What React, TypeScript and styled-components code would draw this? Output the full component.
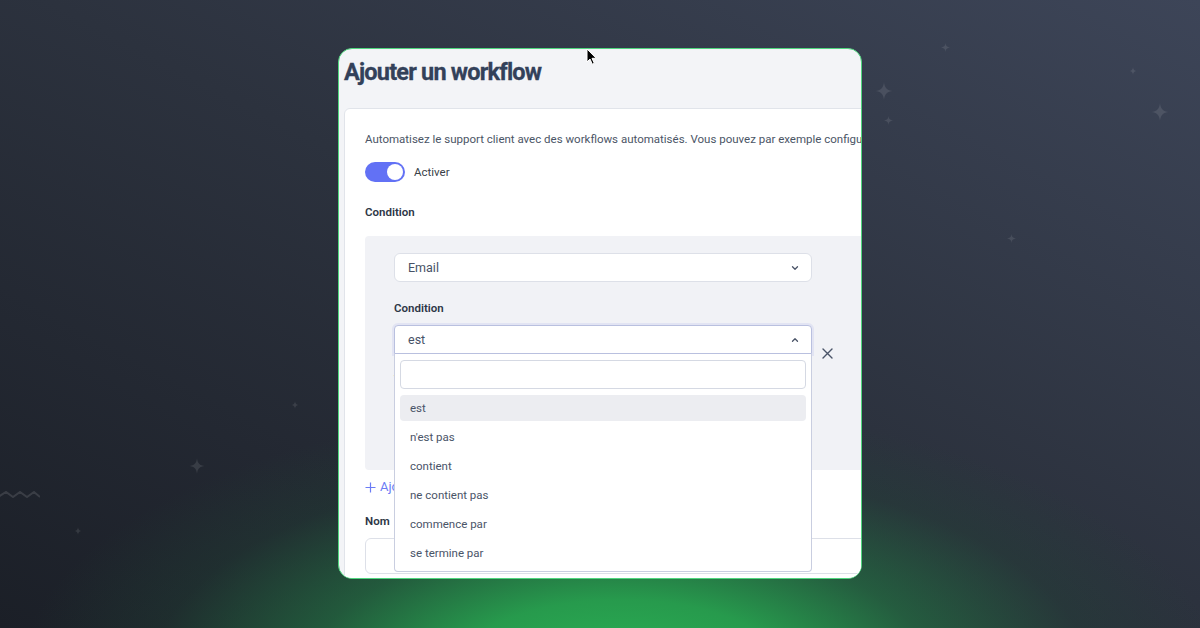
import React from 'react';
import styled, { createGlobalStyle } from 'styled-components';

const GlobalStyle = createGlobalStyle`
  html, body {
    margin: 0;
    padding: 0;
    width: 1200px;
    height: 628px;
    overflow: hidden;
    font-family: Roboto, "Liberation Sans", sans-serif;
  }
  * { box-sizing: border-box; }
`;

const Page = styled.div`
  position: relative;
  width: 1200px;
  height: 628px;
  display: flex;
  justify-content: center;
  align-items: flex-start;
  padding-top: 48px;
  background:
    radial-gradient(ellipse 600px 270px at 620px 675px, #2bb455 0%, rgba(39, 160, 78, 0.95) 28%, rgba(35, 112, 66, 0.7) 52%, rgba(32, 72, 54, 0.3) 78%, rgba(30, 50, 45, 0) 100%),
    linear-gradient(to bottom left, #3d4558 0%, #2c323e 48%, #1b1f27 100%);
`;

const Sparkle = styled.svg<{ $x: number; $y: number; $size: number }>`
  position: absolute;
  left: ${p => p.$x - p.$size / 2}px;
  top: ${p => p.$y - p.$size / 2}px;
  width: ${p => p.$size}px;
  height: ${p => p.$size}px;
  fill: rgba(255, 255, 255, 0.1);
`;

const Zigzag = styled.svg`
  position: absolute;
  left: 0;
  top: 488px;
  width: 40px;
  height: 14px;
  fill: none;
  stroke: rgba(255, 255, 255, 0.12);
  stroke-width: 2;
`;

const Window = styled.div`
  position: relative;
  width: 524px;
  height: 531px;
  border: 1.5px solid #4fd67e;
  border-radius: 14px;
  background: #f3f4f7;
  overflow: hidden;
  padding: 7px 0 0 5px;
`;

const Title = styled.h1`
  margin: 0;
  font-size: 23.5px;
  line-height: 32px;
  font-weight: 700;
  letter-spacing: -0.8px;
  color: #33415a;
  -webkit-text-stroke: 0.3px #33415a;
`;

const Card = styled.div`
  margin-top: 20px;
  width: 720px;
  background: #ffffff;
  border: 1px solid #e1e4ea;
  border-radius: 6px;
  padding: 21px 20px 20px 20px;
`;

const Description = styled.p`
  margin: 0;
  font-size: 11.5px;
  line-height: 18px;
  color: #4b5566;
  white-space: nowrap;
`;

const ToggleRow = styled.div`
  margin-top: 14px;
  display: flex;
  align-items: center;
  gap: 9px;
`;

const Track = styled.div`
  width: 40px;
  height: 20px;
  border-radius: 10px;
  background: #6271f5;
  display: flex;
  align-items: center;
  justify-content: flex-end;
  padding: 0 2px;
`;

const Knob = styled.div`
  width: 16px;
  height: 16px;
  border-radius: 50%;
  background: #ffffff;
`;

const ToggleLabel = styled.span`
  font-size: 11.5px;
  color: #3a3f48;
`;

const Label = styled.div<{ $top: number }>`
  margin-top: ${p => p.$top}px;
  font-size: 11.5px;
  line-height: 16px;
  font-weight: 600;
  color: #2d3646;
`;

const ConditionPanel = styled.div`
  margin-top: 16px;
  background: #f1f2f6;
  border-radius: 4px;
  padding: 17px 29px 16px 29px;
  display: flex;
  align-items: center;
`;

const Fields = styled.div`
  width: 418px;
  display: flex;
  flex-direction: column;
`;

const Select = styled.div<{ $open?: boolean }>`
  height: 29px;
  display: flex;
  align-items: center;
  justify-content: space-between;
  padding: 0 12px 0 13px;
  background: #ffffff;
  border: 1px solid ${p => (p.$open ? '#b9c0df' : '#dde0e8')};
  border-radius: ${p => (p.$open ? '4px 4px 0 0' : '6px')};
  box-shadow: ${p => (p.$open ? '0 0 0 2px rgba(120, 130, 220, 0.12)' : 'none')};
  font-size: 12.5px;
  color: #475266;
`;

const SelectWrap = styled.div<{ $top: number }>`
  position: relative;
  margin-top: ${p => p.$top}px;
`;

const Dropdown = styled.div`
  position: absolute;
  z-index: 5;
  left: 0;
  right: 0;
  top: 100%;
  display: flex;
  flex-direction: column;
  background: #ffffff;
  border: 1px solid #c9cee0;
  border-top: none;
  border-radius: 0 0 4px 4px;
  padding: 6px 5px 5px 5px;
`;

const Search = styled.div`
  height: 29px;
  border: 1px solid #d5d9e3;
  border-radius: 4px;
  margin-bottom: 3px;
`;

const Option = styled.div<{ $active?: boolean }>`
  height: 26px;
  margin-top: 3px;
  display: flex;
  align-items: center;
  padding-left: 10px;
  border-radius: 4px;
  background: ${p => (p.$active ? '#ecedf1' : 'transparent')};
  font-size: 11.5px;
  color: #4a5468;
`;

const ValueBox = styled.div`
  margin-top: 9px;
  height: 58px;
  background: #ffffff;
  border: 1px solid #dde0e8;
  border-radius: 6px;
`;

const RemoveButton = styled.button`
  margin-left: 5px;
  width: 20px;
  height: 20px;
  padding: 0;
  border: none;
  background: transparent;
  display: flex;
  align-items: center;
  justify-content: center;
  color: #4a5468;
`;

const AddLink = styled.div`
  margin-top: 8px;
  display: flex;
  align-items: center;
  gap: 4px;
  font-size: 13px;
  line-height: 18px;
  color: #6b7cf5;
`;

const TextInput = styled.div`
  margin-top: 9px;
  height: 36px;
  border: 1px solid #dde0e8;
  border-radius: 6px;
  background: #ffffff;
`;

const Cursor = styled.svg`
  position: absolute;
  left: 586px;
  top: 48px;
  width: 12px;
  height: 18px;
  z-index: 10;
`;

const Chevron: React.FC<{ up?: boolean }> = ({ up }) => (
  <svg width="8" height="6" viewBox="0 0 8 6" fill="none" stroke="#4a5468" strokeWidth="1.3" strokeLinecap="round" strokeLinejoin="round">
    <path d={up ? 'M1.5 4.2 L4 1.7 L6.5 4.2' : 'M1.5 1.8 L4 4.3 L6.5 1.8'} />
  </svg>
);

const sparklePath = 'M12 0 C12.8 8 16 11.2 24 12 C16 12.8 12.8 16 12 24 C11.2 16 8 12.8 0 12 C8 11.2 11.2 8 12 0 Z';

const sparkles = [
  { x: 884, y: 91, s: 18 },
  { x: 888, y: 120, s: 9 },
  { x: 945, y: 47, s: 9 },
  { x: 1133, y: 71, s: 8 },
  { x: 1160, y: 112, s: 18 },
  { x: 1011, y: 238, s: 9 },
  { x: 295, y: 405, s: 8 },
  { x: 197, y: 466, s: 16 },
  { x: 78, y: 531, s: 8 },
];

const options = ['est', "n'est pas", 'contient', 'ne contient pas', 'commence par', 'se termine par'];

export default function App() {
  return (
    <>
      <GlobalStyle />
      <Page>
        {sparkles.map((s, i) => (
          <Sparkle key={i} $x={s.x} $y={s.y} $size={s.s} viewBox="0 0 24 24">
            <path d={sparklePath} />
          </Sparkle>
        ))}
        <Zigzag viewBox="0 0 40 14">
          <path d="M-2 9 L6 4 L13 9 L20 4 L27 9 L34 4 L40 9" />
        </Zigzag>

        <Window>
          <Title>Ajouter un workflow</Title>
          <Card>
            <Description>
              Automatisez le support client avec des workflows automatisés. Vous pouvez par exemple configurer une réponse automatique.
            </Description>
            <ToggleRow>
              <Track>
                <Knob />
              </Track>
              <ToggleLabel>Activer</ToggleLabel>
            </ToggleRow>

            <Label $top={22}>Condition</Label>
            <ConditionPanel>
              <Fields>
                <Select>
                  Email
                  <Chevron />
                </Select>
                <Label $top={18}>Condition</Label>
                <SelectWrap $top={9}>
                  <Select $open>
                    est
                    <Chevron up />
                  </Select>
                  <Dropdown>
                    <Search />
                    {options.map((o, i) => (
                      <Option key={o} $active={i === 0}>
                        {o}
                      </Option>
                    ))}
                  </Dropdown>
                </SelectWrap>
                <Label $top={17}>Valeur</Label>
                <ValueBox />
              </Fields>
              <RemoveButton>
                <svg width="11" height="11" viewBox="0 0 11 11" stroke="currentColor" strokeWidth="1.4" strokeLinecap="round">
                  <path d="M1 1 L10 10 M10 1 L1 10" />
                </svg>
              </RemoveButton>
            </ConditionPanel>

            <AddLink>
              <svg width="11" height="11" viewBox="0 0 11 11" stroke="currentColor" strokeWidth="1.2">
                <path d="M5.5 0.5 V10.5 M0.5 5.5 H10.5" />
              </svg>
              Ajouter une condition
            </AddLink>

            <Label $top={17}>Nom</Label>
            <TextInput />
          </Card>
        </Window>

        <Cursor viewBox="0 0 12 18">
          <path d="M1 1 L1 14 L4 11 L6.3 16.2 L8.3 15.3 L6 10.3 L10.2 10.3 Z" fill="#000" stroke="#fff" strokeWidth="1" strokeLinejoin="round" />
        </Cursor>
      </Page>
    </>
  );
}
